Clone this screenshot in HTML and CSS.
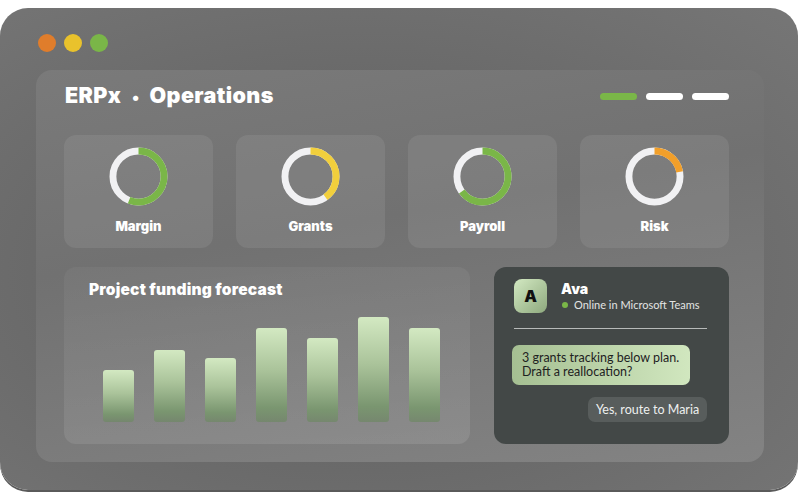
FILE: index.html
```html
<!DOCTYPE html>
<html>

<head>
    <title>ERPx Operations</title>
    <meta charset="utf-8">
    <meta name="viewport" content="width=device-width, initial-scale=1.0">

    <link rel="stylesheet" href="styles.css">
</head>

<body>

    <div class="window">
        <div class="dots">
            <span class="dot orange"></span>
            <span class="dot yellow"></span>
            <span class="dot green"></span>
        </div>

        <div class="panel">
            <div class="panel-head">
                <h1>ERPx<span class="sep">•</span>Operations</h1>
                <div class="tabs">
                    <span class="tab active"></span>
                    <span class="tab"></span>
                    <span class="tab"></span>
                </div>
            </div>

            <div class="kpis">
                <div class="kpi">
                    <svg class="ring" viewBox="0 0 60 60">
                        <circle class="track" cx="30" cy="30" r="26" />
                        <circle class="arc" cx="30" cy="30" r="26" pathLength="100" stroke="#7ab648" stroke-dasharray="56 100" />
                    </svg>
                    <p>Margin</p>
                </div>
                <div class="kpi">
                    <svg class="ring" viewBox="0 0 60 60">
                        <circle class="track" cx="30" cy="30" r="26" />
                        <circle class="arc" cx="30" cy="30" r="26" pathLength="100" stroke="#f2cf3c" stroke-dasharray="40 100" />
                    </svg>
                    <p>Grants</p>
                </div>
                <div class="kpi">
                    <svg class="ring" viewBox="0 0 60 60">
                        <circle class="track" cx="30" cy="30" r="26" />
                        <circle class="arc" cx="30" cy="30" r="26" pathLength="100" stroke="#7ab648" stroke-dasharray="65 100" />
                    </svg>
                    <p>Payroll</p>
                </div>
                <div class="kpi">
                    <svg class="ring" viewBox="0 0 60 60">
                        <circle class="track" cx="30" cy="30" r="26" />
                        <circle class="arc" cx="30" cy="30" r="26" pathLength="100" stroke="#f19f2a" stroke-dasharray="22 100" />
                    </svg>
                    <p>Risk</p>
                </div>
            </div>

            <div class="lower">
                <div class="forecast">
                    <h2>Project funding forecast</h2>
                    <div class="bars">
                        <div class="bar" style="height: 52px"></div>
                        <div class="bar" style="height: 72px"></div>
                        <div class="bar" style="height: 64px"></div>
                        <div class="bar" style="height: 94px"></div>
                        <div class="bar" style="height: 84px"></div>
                        <div class="bar" style="height: 105px"></div>
                        <div class="bar" style="height: 94px"></div>
                    </div>
                </div>

                <div class="chat">
                    <div class="chat-head">
                        <div class="avatar">A</div>
                        <div>
                            <div class="name">Ava</div>
                            <div class="status"><span class="online"></span>Online in Microsoft Teams</div>
                        </div>
                    </div>
                    <hr>
                    <div class="bubble bot">3 grants tracking below plan.<br>Draft a reallocation?</div>
                    <div class="bubble me">Yes, route to Maria</div>
                </div>
            </div>
        </div>
    </div>

</body>

</html>
```

FILE: styles.css
```css
body {
    margin: 0;
    background-color: #ffffff;
    font-family: 'Lato', 'Noto Sans', sans-serif;
    width: 800px;
    height: 498px;
    overflow: hidden;
}

.window {
    margin-top: 8px;
    width: 798px;
    height: 482px;
    box-sizing: border-box;
    padding: 26px 34px 28px 36px;
    border-radius: 28px;
    background: radial-gradient(ellipse at 45% 55%, #5f5f5f 0%, #686868 45%, #767676 100%);
    box-shadow: 0 2px 0 #5a5a5a;
}

.dots {
    display: flex;
    gap: 8px;
    margin-left: 2px;
    height: 18px;
}

.dot {
    width: 18px;
    height: 18px;
    border-radius: 50%;
}

.orange {
    background-color: #e07d2b;
}

.yellow {
    background-color: #e9c22c;
}

.green {
    background-color: #7ab648;
}

.panel {
    margin-top: 18px;
    height: 392px;
    box-sizing: border-box;
    padding: 14px 35px 18px 28px;
    border-radius: 16px;
    background: linear-gradient(170deg, #7a7a7a 0%, #717171 40%, #838383 100%);
}

.panel-head {
    display: flex;
    align-items: center;
    justify-content: space-between;
    height: 24px;
}

/* headings use a heavier, wider face than the body */
h1,
h2,
.kpi p,
.name,
.avatar {
    font-family: 'Inter', 'Lato', sans-serif;
    font-weight: 900;
}

h1 {
    margin: 0 0 0 1px;
    font-size: 21.5px;
    color: #ffffff;
    line-height: 24px;
    letter-spacing: 0.4px;
}

.sep {
    display: inline-block;
    font-size: 17px;
    margin: 0 10px 0 11px;
}

.tabs {
    display: flex;
    gap: 9px;
}

.tab {
    width: 37px;
    height: 7px;
    border-radius: 4px;
    background-color: #ffffff;
}

.tab.active {
    background-color: #7ab648;
}

.kpis {
    margin-top: 27px;
    display: grid;
    grid-template-columns: repeat(4, 149px);
    justify-content: space-between;
}

.kpi {
    height: 113px;
    box-sizing: border-box;
    padding-top: 12px;
    border-radius: 12px;
    background-color: rgba(255, 255, 255, 0.08);
    text-align: center;
}

.ring {
    width: 59px;
    height: 59px;
    display: block;
    margin: 0 auto;
    transform: rotate(-90deg);
}

.ring circle {
    fill: none;
    stroke-width: 7;
}

.ring .track {
    stroke: #f1f1f3;
}

.kpi p {
    margin: 11px 0 0;
    font-size: 13px;
    line-height: 18px;
    color: #ffffff;
}

.lower {
    margin-top: 19px;
    display: flex;
    gap: 24px;
    height: 177px;
}

.forecast {
    width: 406px;
    box-sizing: border-box;
    padding: 13px 30px 22px 25px;
    border-radius: 12px;
    background: linear-gradient(175deg, rgba(255, 255, 255, 0.04), rgba(255, 255, 255, 0.1));
    display: flex;
    flex-direction: column;
}

h2 {
    margin: 0;
    font-size: 15.5px;
    line-height: 20px;
    letter-spacing: 0.2px;
    color: #ffffff;
}

.bars {
    flex: 1;
    display: flex;
    align-items: flex-end;
    gap: 20px;
    padding-left: 14px;
}

.bar {
    width: 31px;
    border-radius: 3px;
    background: linear-gradient(to bottom, #d3e9c2 0%, #aac39a 45%, #7a9670 85%, rgba(110, 135, 100, 0.7) 100%);
}

.chat {
    width: 235px;
    box-sizing: border-box;
    padding: 12px 22px 0 20px;
    border-radius: 12px;
    background-color: #434847;
}

.chat-head {
    display: flex;
    align-items: center;
    gap: 14px;
}

.avatar {
    width: 33px;
    height: 34px;
    border-radius: 8px;
    background: linear-gradient(135deg, #d3e9c2, #8ea97e);
    display: flex;
    align-items: center;
    justify-content: center;
    font-size: 16px;
    color: #111111;
}

.name {
    font-size: 14px;
    line-height: 17px;
    color: #ffffff;
}

.status {
    display: flex;
    align-items: center;
    gap: 6px;
    margin-top: 1px;
    font-size: 11px;
    line-height: 14px;
    color: #e2e4e3;
    margin-left: 1px;
}

.online {
    width: 6px;
    height: 6px;
    border-radius: 50%;
    background-color: #7ab648;
}

hr {
    margin: 15px 0 0;
    border: none;
    height: 1px;
    background-color: #b7bab9;
}

.bubble {
    font-size: 12.5px;
    line-height: 14px;
    border-radius: 7px;
}

.bot {
    margin: 16px 0 0 -2px;
    width: 178px;
    box-sizing: border-box;
    padding: 6px 10px;
    color: #1e221f;
    background: linear-gradient(to right, #a5bf92, #d1e7bf);
}

.me {
    margin: 12px 0 0 auto;
    width: 119px;
    height: 25px;
    line-height: 25px;
    text-align: center;
    color: #eef0ef;
    background-color: #585d5c;
}
```
